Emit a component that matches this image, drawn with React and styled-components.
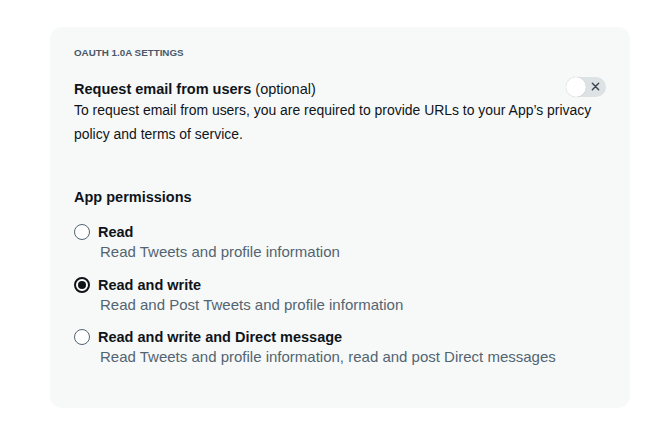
import styled, { createGlobalStyle } from 'styled-components';

const GlobalStyle = createGlobalStyle`
  html, body {
    margin: 0;
    padding: 0;
    background: #ffffff;
  }
  body {
    font-family: "Liberation Sans", Arial, sans-serif;
    color: #0f1419;
  }
`;

const permissions = [
  { id: 'read', label: 'Read', desc: 'Read Tweets and profile information' },
  { id: 'write', label: 'Read and write', desc: 'Read and Post Tweets and profile information' },
  {
    id: 'dm',
    label: 'Read and write and Direct message',
    desc: 'Read Tweets and profile information, read and post Direct messages',
  },
];

function App() {
  const selected = 'write';

  return (
    <Page>
      <GlobalStyle />
      <Card>
        <Heading>OAUTH 1.0A SETTINGS</Heading>

        <EmailRow>
          <EmailText>
            <Strong>Request email from users</Strong> (optional)
          </EmailText>
          <Toggle>
            <Knob />
            <Cross>
              <svg viewBox="0 0 10 10" width="9" height="9">
                <path d="M1.5 1.5 L8.5 8.5 M8.5 1.5 L1.5 8.5" stroke="#3b4650" strokeWidth="1.6" strokeLinecap="round" />
              </svg>
            </Cross>
          </Toggle>
        </EmailRow>
        <Body>
          To request email from users, you are required to provide URLs to your App’s privacy policy and terms of
          service.
        </Body>

        <SubHeading>App permissions</SubHeading>
        <List>
          {permissions.map((p) => (
            <Option key={p.id}>
              <Radio checked={p.id === selected} />
              <OptionText>
                <OptionLabel>{p.label}</OptionLabel>
                <OptionDesc>{p.desc}</OptionDesc>
              </OptionText>
            </Option>
          ))}
        </List>
      </Card>
    </Page>
  );
}

const Page = styled.div`
  padding: 27px 39px 28px 50px;
`;

const Card = styled.div`
  background: #f7f9f9;
  border-radius: 12px;
  padding: 19px 24px 50px 24px;
  height: 381px;
  box-sizing: border-box;
`;

const Heading = styled.div`
  font-size: 9.8px;
  font-weight: 700;
  color: #4a5866;
  line-height: 13px;
`;

const EmailRow = styled.div`
  display: flex;
  justify-content: space-between;
  align-items: center;
  margin-top: 20px;
`;

const EmailText = styled.div`
  font-size: 14.5px;
  line-height: 20px;
`;

const Strong = styled.span`
  font-weight: 700;
`;

const Toggle = styled.div`
  position: relative;
  width: 40px;
  height: 20px;
  border-radius: 10px;
  background: #dde2e5;
  margin-top: -4px;
`;

const Knob = styled.div`
  position: absolute;
  left: 0;
  top: 0;
  width: 20px;
  height: 20px;
  border-radius: 50%;
  background: #ffffff;
  box-shadow: 0 0 1px rgba(0, 0, 0, 0.25);
`;

const Cross = styled.div`
  position: absolute;
  right: 6px;
  top: 5px;
  display: flex;
`;

const Body = styled.p`
  margin: -1px 0 0;
  font-size: 13.95px;
  line-height: 24px;
  color: #0f1419;
  max-width: 530px;
`;

const SubHeading = styled.div`
  font-size: 14.5px;
  font-weight: 700;
  margin-top: 41px;
  line-height: 20px;
`;

const List = styled.div`
  display: flex;
  flex-direction: column;
  gap: 12.5px;
  margin-top: 15px;
`;

const Option = styled.div`
  display: flex;
  align-items: flex-start;
  gap: 8px;
`;

const Radio = styled.span`
  width: 16px;
  height: 16px;
  border-radius: 50%;
  border: 1px solid #536471;
  background: #ffffff;
  box-sizing: border-box;
  margin-top: 2px;
  flex-shrink: 0;
  display: flex;
  align-items: center;
  justify-content: center;
  ${({ checked }) =>
    checked &&
    `
    border: 2px solid #0f1419;
    &::after {
      content: '';
      width: 8px;
      height: 8px;
      border-radius: 50%;
      background: #0f1419;
    }
  `}
`;

const OptionText = styled.div`
  display: flex;
  flex-direction: column;
`;

const OptionLabel = styled.div`
  font-size: 14.5px;
  font-weight: 700;
  line-height: 20px;
`;

const OptionDesc = styled.div`
  font-size: 15px;
  line-height: 20px;
  color: #536471;
  padding-left: 2px;
`;

export default App;
